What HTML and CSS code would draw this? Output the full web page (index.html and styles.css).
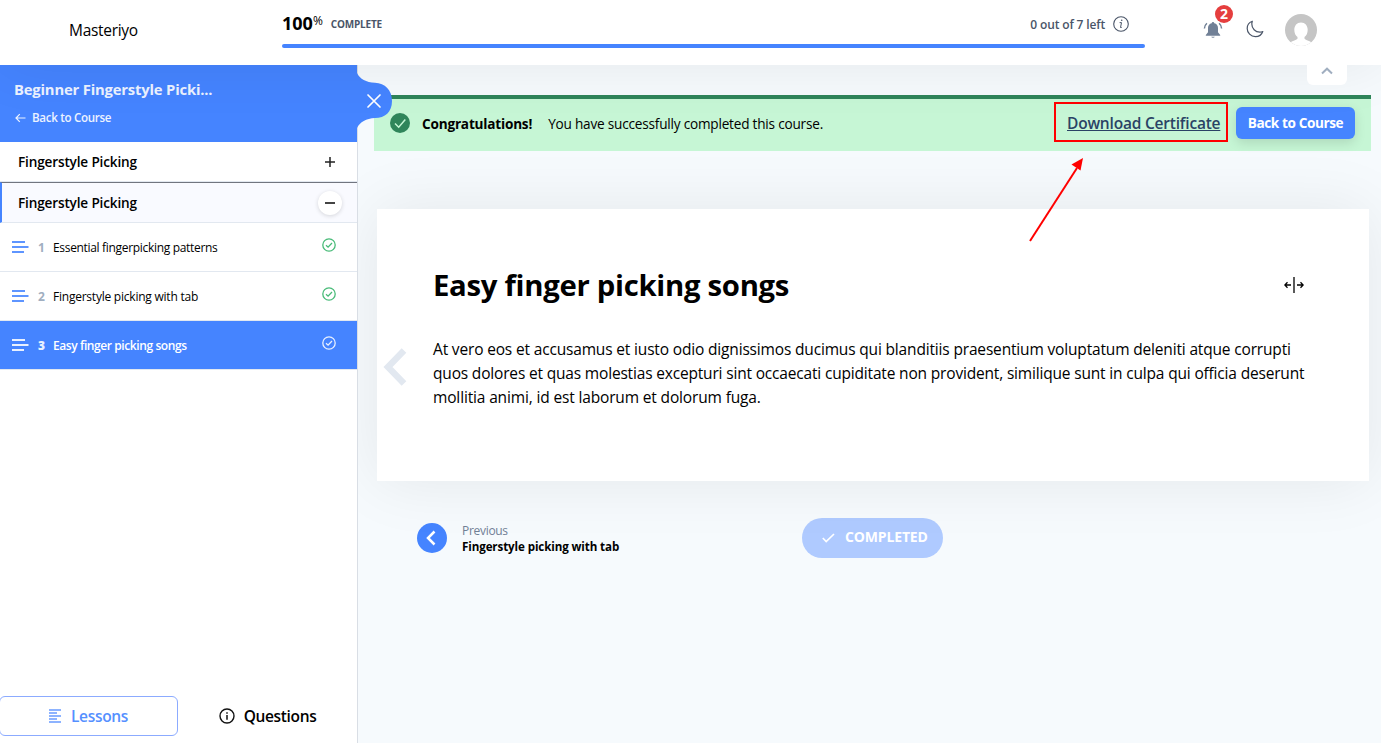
FILE: index.html
```
<!DOCTYPE html>
<html lang="en">
<head>
<meta charset="utf-8">
<title>Easy finger picking songs</title>
<link rel="stylesheet" href="styles.css">
</head>
<body>
<header class="topbar">
  <div class="brand"><span class="t brand-name">Masteriyo</span></div>
  <div class="progress">
    <div class="progress-info">
      <div class="percent"><b class="t hundred">100</b><span class="t pct">%</span><span class="t complete">COMPLETE</span></div>
      <div class="left"><span class="t left-text">0 out of 7 left</span>
        <svg width="16" height="16" viewBox="0 0 16 16" fill="none" stroke="#4a5568"><circle cx="8" cy="8" r="7.3" stroke-width="1.1"/><path d="M6.6 6.6h1.9l-1 4.900h1.200" stroke-width="1"/><circle cx="8.700" cy="4.300" r=".8" fill="#4a5568" stroke="none"/></svg>
      </div>
    </div>
    <div class="bar"></div>
  </div>
  <div class="actions">
    <div class="bell">
      <svg width="20" height="18" viewBox="0 0 20 18"><path d="M10 1a1.300 1.300 0 0 0-1.300 1.200C6.300 2.700 5 4.500 5 7v4.200L2.800 14v.8h14.400V14L15 11.200V7c0-2.500-1.300-4.300-3.700-4.800A1.300 1.300 0 0 0 10 1zM8.200 15.800a1.900 1.500 0 0 0 3.600 0z" fill="#718096"/><path d="M3.900 2.200C2.400 3.500 1.500 5.200 1.400 7.500M16.100 2.200c1.500 1.300 2.400 3 2.500 5.300" fill="none" stroke="#718096" stroke-width="1.500"/></svg>
      <span class="badge">2</span>
    </div>
    <svg class="moon" width="18" height="18" viewBox="0 0 18 18" fill="none" stroke="#4a5568" stroke-width="1.200" stroke-linejoin="round"><path d="M6.300 1.200C3.200 2.300 1.200 5 1.200 8.400c0 4.500 3.600 8.200 8.200 8.200 3.500 0 6.300-2 7.400-5.100-1 .4-2 .6-3 .6-4.500 0-8-3.600-8-8 0-1 .2-2 .5-2.900z"/></svg>
    <svg class="avatar" width="32" height="32" viewBox="0 0 32 32"><defs><clipPath id="disc"><circle cx="16" cy="16" r="16"/></clipPath></defs><g clip-path="url(#disc)"><path fill="#c5c5c5" d="M0 0h32v32H0z"/><path d="M16 8.500c4.100 0 6.700 3.200 6.700 7.300 0 3.300-1.300 6-3.200 7.300v1.300c0 1.200 4 1.900 8 4.200V32H4.500v-3.400c4-2.300 8-3 8-4.200v-1.300c-1.900-1.300-3.200-4-3.200-7.300 0-4.100 2.600-7.300 6.700-7.300z" fill="#fff"/></g></svg>
  </div>
  <div class="collapse"><svg width="12" height="8" viewBox="0 0 12 8" fill="none" stroke="#a0aec0" stroke-width="2"><path d="M1 6.500 6 1.700l5 4.800"/></svg></div>
</header>
<div class="layout">
  <aside class="sidebar">
    <div class="course">
      <div class="t course-title">Beginner Fingerstyle Picki...</div>
      <div class="back"><svg width="11" height="10" viewBox="0 0 11 10" fill="none" stroke="#fff" stroke-width="1.200"><path d="M10.500 5H1M4.800 1.200 1 5l3.800 3.800"/></svg><span class="t back-text">Back to Course</span></div>
      <svg class="close" width="36" height="66" viewBox="0 0 36 66"><path d="M0 0V8C3 14 9 17.500 18 17.700 28 18 35 25 35 36S28 53 18 53C9 53.500 3 57 0 63z" fill="#4584ff"/><path d="m11 30 12 12M23 30 11 42" stroke="#fff" stroke-width="1.700" stroke-linecap="round"/></svg>
    </div>
    <div class="section"><span class="t section-title">Fingerstyle Picking</span><svg class="plus" width="10" height="10" viewBox="0 0 10 10"><path d="M5 0v10M0 5h10" stroke="#222" stroke-width="1.500"/></svg></div>
    <div class="section open"><span class="t section-title">Fingerstyle Picking</span><span class="minus"><i></i></span></div>
    <div class="lesson"><svg class="lines" width="17" height="12" viewBox="0 0 17 12"><path d="M0 1h13M0 6h16.500M0 11h12" stroke="currentColor" stroke-width="1.800"/></svg><b class="num">1</b><span class="t l1">Essential fingerpicking patterns</span><svg class="check" width="14" height="14" viewBox="0 0 14 14" fill="none" stroke="currentColor" stroke-width="1.300"><circle cx="7" cy="7" r="6.200"/><path d="m4 7.200 2.100 2L10 5"/></svg></div>
    <div class="lesson"><svg class="lines" width="17" height="12" viewBox="0 0 17 12"><path d="M0 1h13M0 6h16.500M0 11h12" stroke="currentColor" stroke-width="1.800"/></svg><b class="num">2</b><span class="t l2">Fingerstyle picking with tab</span><svg class="check" width="14" height="14" viewBox="0 0 14 14" fill="none" stroke="currentColor" stroke-width="1.300"><circle cx="7" cy="7" r="6.200"/><path d="m4 7.200 2.100 2L10 5"/></svg></div>
    <div class="lesson active"><svg class="lines" width="17" height="12" viewBox="0 0 17 12"><path d="M0 1h13M0 6h16.500M0 11h12" stroke="currentColor" stroke-width="1.800"/></svg><b class="num">3</b><span class="t l3">Easy finger picking songs</span><svg class="check" width="14" height="14" viewBox="0 0 14 14" fill="none" stroke="currentColor" stroke-width="1.300"><circle cx="7" cy="7" r="6.200"/><path d="m4 7.200 2.100 2L10 5"/></svg></div>
    <nav class="tabs">
      <div class="tab current"><svg width="12" height="14" viewBox="0 0 12 14"><path d="M0 1h12M0 4h8M0 7h12M0 10h8M0 13h12" stroke="#689aff" stroke-width="1.600"/></svg><span class="t lessons">Lessons</span></div>
      <div class="tab"><svg width="16" height="16" viewBox="0 0 16 16" fill="none" stroke="#111"><circle cx="8" cy="8" r="7" stroke-width="1.400"/><path d="M8 7v4.800M8 4.200v1.600" stroke-width="1.500"/></svg><span class="t questions">Questions</span></div>
    </nav>
  </aside>
  <main class="content">
    <div class="notice">
      <svg width="20" height="20" viewBox="0 0 20 20"><circle cx="10" cy="10" r="10" fill="#2f855a"/><path d="m5 10.500 3.700 3.700 6.600-7.700" fill="none" stroke="#c6f6d5" stroke-width="1.500"/></svg>
      <b class="t congrats">Congratulations!</b><span class="t success">You have successfully completed this course.</span>
      <span class="certificate"><a class="t cert-link">Download Certificate</a></span>
      <span class="button"><span class="t button-text">Back to Course</span></span>
    </div>
    <article class="card">
      <div class="card-head"><h1 class="t heading">Easy finger picking songs</h1><svg width="20" height="18" viewBox="0 0 20 18" fill="none" stroke="#000" stroke-width="1.300"><path d="M10 1v16"/><path d="M7 9H.8M3.500 6.300.8 9l2.700 2.700M13 9h6.200M16.500 6.300 19.200 9l-2.700 2.700"/></svg></div>
      <p class="text"><span class="t p1">At vero eos et accusamus et iusto odio dignissimos ducimus qui blanditiis praesentium voluptatum deleniti atque corrupti</span><br><span class="t p2">quos dolores et quas molestias excepturi sint occaecati cupiditate non provident, similique sunt in culpa qui officia deserunt</span><br><span class="t p3">mollitia animi, id est laborum et dolorum fuga.</span></p>
      <svg class="prev-arrow" width="24" height="38" viewBox="0 0 24 38" fill="none" stroke="#e2e8f0" stroke-width="6.500"><path d="M21 2.500 5 19l16 16.500"/></svg>
    </article>
    <footer class="pager">
      <span class="round"><svg width="10" height="16" viewBox="0 0 10 16" fill="none" stroke="#fff" stroke-width="2.500"><path d="M8.500 1.500 2 8l6.500 6.500"/></svg></span>
      <div class="prev"><span class="t prev-label">Previous</span><b class="t prev-title">Fingerstyle picking with tab</b></div>
      <div class="completed"><svg width="13" height="10" viewBox="0 0 13 10" fill="none" stroke="#fff" stroke-width="1.700"><path d="m.8 5 3.400 3.500L12 1"/></svg><b class="t completed-text">COMPLETED</b></div>
    </footer>
  </main>
</div>
<svg class="arrow" width="60" height="90" viewBox="0 0 60 90"><path d="M4 86 51 13" stroke="#f00" stroke-width="2"/><path d="m57 3-2.500 12.500-9-6z" fill="#f00"/></svg>
</body>
</html>
```
FILE: styles.css
```
* { box-sizing: border-box; }
body { margin: 0; height: 743px; overflow: hidden; position: relative; font-family: "Open Sans", "Noto Sans", sans-serif; color: #000; background: #f6fafd; }
svg { display: block; flex: none; }
.t { white-space: nowrap; }
.topbar { position: relative; z-index: 2; display: flex; height: 65px; background: #fff; box-shadow: 0 0 60px rgba(0,0,0,.08); }
.brand { width: 282px; padding: 18px 0 0 69px; font-size: 15.500px; line-height: 25px; letter-spacing: -.3px; }
.progress { width: 863px; padding-top: 12px; }
.progress-info { display: flex; justify-content: space-between; height: 32px; }
.percent { display: flex; line-height: 22px; }
.hundred { font-size: 18px; }
.pct { font-size: 12px; line-height: 18px; }
.complete { margin-left: 8px; font-size: 10px; line-height: 24px; font-weight: 700; letter-spacing: -.2px; color: #4a5568; }
.left { display: flex; gap: 8px; padding: 4px 16px 0 0; font-size: 12px; line-height: 17px; font-weight: 600; color: #4a5568; }
.left-text { letter-spacing: -.15px; }
.bar { height: 4px; border-radius: 2px; background: #4584ff; }
.actions { display: flex; padding-left: 58px; }
.bell { position: relative; width: 43px; padding-top: 21px; }
.badge { position: absolute; left: 12px; top: 5px; width: 18px; height: 18px; border-radius: 50%; background: #e53e3e; color: #fff; font-size: 14px; line-height: 18px; font-weight: 700; text-align: center; }
.moon { margin-top: 20px; }
.avatar { margin: 14px 0 0 21px; }
.collapse { position: absolute; right: 34px; top: 65px; width: 40px; height: 20px; padding: 2px 0 0 14px; border-radius: 0 0 6px 6px; background: #fff; }
.layout { display: flex; height: 678px; }
.sidebar { position: relative; z-index: 1; display: flex; flex: none; flex-direction: column; width: 358px; border-right: 1px solid #d9dee5; background: #fff; }
.course { position: relative; height: 77px; padding: 14px 14px 0; background: #4584ff; color: #fff; }
.course-title { font-size: 14.800px; line-height: 20px; font-weight: 700; letter-spacing: -.18px; opacity: .9; }
.back { display: flex; align-items: center; gap: 6px; margin-top: 11px; padding-left: 1px; font-size: 11.600px; line-height: 16px; font-weight: 600; letter-spacing: -.32px; opacity: .9; }
.close { position: absolute; left: 357px; top: 0; }
.section { display: flex; align-items: center; justify-content: space-between; height: 40px; padding: 0 22px 0 18px; border-bottom: 1px solid #e2e8f0; font-size: 13.600px; font-weight: 600; letter-spacing: -.16px; }
.open { height: 41px; padding: 0 15px 0 16px; border-top: 1px solid #71757f; border-left: 2px solid #4584ff; background: #f9faff; }
.minus { display: flex; align-items: center; justify-content: center; width: 24px; height: 24px; border-radius: 50%; background: #fff; box-shadow: 0 1px 4px rgba(0,0,0,.15); }
.minus i { width: 10px; height: 2px; background: #444; }
.lesson { display: flex; align-items: center; height: 49px; padding: 0 21px 0 12px; border-bottom: 1px solid #e2e8f0; font-size: 12px; }
.l1 { letter-spacing: -.32px; }
.l2 { letter-spacing: -.23px; }
.l3 { letter-spacing: -.41px; }
.lines { color: #5e95ff; }
.num { width: 24px; padding-left: 9px; font-size: 12px; color: #a0aec0; }
.check { margin: -5px 0 0 auto; color: #48bb78; }
.active { background: #4584ff; color: #fff; font-weight: 600; }
.active svg, .active .num { color: #e8f0ff; }
.tabs { display: flex; margin-top: auto; padding-bottom: 7px; }
.tab { display: flex; align-items: center; justify-content: center; width: 179px; height: 40px; gap: 9px; font-size: 15.500px; font-weight: 600; letter-spacing: -.35px; }
.current { gap: 10px; margin-left: -1px; border: 1px solid #8cabff; border-radius: 6px; color: #5590ff; letter-spacing: -.3px; }
.content { position: relative; flex: 1; min-width: 0; padding: 30px 10px 0 16px; }
.notice { display: flex; align-items: center; height: 56px; padding: 0 16px 4px; border-top: 4px solid #2f855a; background: #c6f6d5; font-size: 13.600px; }
.congrats { margin-left: 12px; letter-spacing: -.2px; }
.success { margin-left: 16px; letter-spacing: -.205px; }
.certificate { margin: -2px 8px 0 auto; width: 174px; height: 40px; border: 2px solid #f00; padding-left: 11px; font-size: 15.500px; line-height: 38px; color: #2a4365; font-weight: 600; letter-spacing: -.2px; text-decoration: underline; }
.button { width: 119px; height: 32px; border-radius: 6px; background: #4584ff; color: #fff; font-weight: 700; line-height: 32px; letter-spacing: -.4px; text-align: center; box-shadow: 0 4px 12px rgba(0,0,0,.12); }
.card { position: relative; height: 272px; margin: 58px 2px 0 3px; padding: 56px 56px 0; background: #fff; box-shadow: 0 0 60px rgba(0,0,0,.08); }
.card-head { display: flex; justify-content: space-between; padding-right: 9px; height: 72px; }
.card-head svg { margin-top: 11px; }
.heading { margin: 0; font-size: 29.300px; line-height: 41px; letter-spacing: -.29px; }
.text { margin: 0; font-size: 15.500px; line-height: 24px; }
.p1 { letter-spacing: -.165px; }
.p2 { letter-spacing: -.175px; }
.p3 { letter-spacing: -.15px; }
.prev-arrow { position: absolute; left: 6px; top: 139px; }
.pager { display: flex; margin-top: 37px; padding-left: 43px; }
.round { width: 30px; height: 30px; margin-top: 5px; border-radius: 50%; background: #4584ff; padding: 7px 0 0 9px; }
.prev { display: flex; flex-direction: column; width: 340px; margin-left: 15px; padding-top: 5px; font-size: 11.600px; line-height: 16px; }
.prev-label { font-size: 12px; letter-spacing: -.3px; color: #718096; }
.prev-title { letter-spacing: -.11px; }
.completed { display: flex; align-items: center; width: 141px; height: 40px; padding-left: 20px; gap: 10px; border-radius: 20px; background: #afcaff; color: #fff; font-size: 14px; }
.completed-text { padding-bottom: 3px; letter-spacing: -.15px; }
.arrow { position: absolute; z-index: 3; left: 1026px; top: 155px; }
```
